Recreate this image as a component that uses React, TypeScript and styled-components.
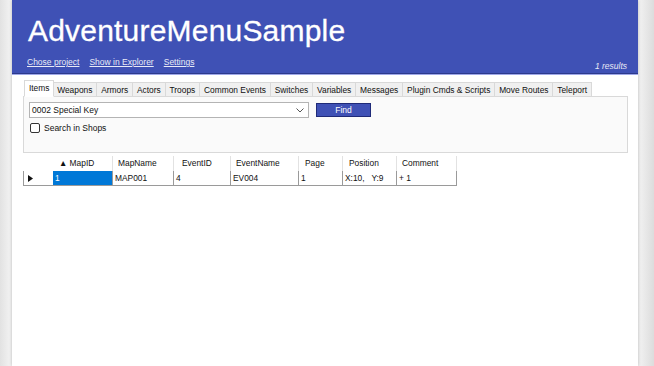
import * as React from 'react';
import styled, { createGlobalStyle } from 'styled-components';

const GlobalStyle = createGlobalStyle`
  html, body {
    margin: 0;
    padding: 0;
    height: 100%;
    overflow: hidden;
  }
  body {
    font-family: "Liberation Sans", Arial, sans-serif;
    background: linear-gradient(90deg, #e2e2e2 0px, #f3f3f3 11px, #f3f3f3 638px, #dcdcdc 654px);
  }
`;

const TABS = [
  'Items',
  'Weapons',
  'Armors',
  'Actors',
  'Troops',
  'Common Events',
  'Switches',
  'Variables',
  'Messages',
  'Plugin Cmds & Scripts',
  'Move Routes',
  'Teleport',
];

const COLUMNS = [
  { title: '▲ MapID', width: 60, pad: 6 },
  { title: 'MapName', width: 61, pad: 5 },
  { title: 'EventID', width: 57, pad: 8 },
  { title: 'EventName', width: 68, pad: 5 },
  { title: 'Page', width: 44, pad: 6 },
  { title: 'Position', width: 54, pad: 6 },
  { title: 'Comment', width: 60, pad: 5 },
];

const ROW = ['1', 'MAP001', '4', 'EV004', '1', 'X:10,   Y:9', '+ 1'];

export default function App() {
  const [tab, setTab] = React.useState(0);
  const [shops, setShops] = React.useState(false);

  return (
    <>
      <GlobalStyle />
      <Window>
        <Header>
          <Title>AdventureMenuSample</Title>
          <LinkBar>
            <Links>
              <HeaderLink>Chose project</HeaderLink>
              <HeaderLink>Show in Explorer</HeaderLink>
              <HeaderLink>Settings</HeaderLink>
            </Links>
            <Results>1 results</Results>
          </LinkBar>
        </Header>
        <Content>
          <TabStrip>
            {TABS.map((t, i) => (
              <Tab key={t} $active={i === tab} onClick={() => setTab(i)}>
                {t}
              </Tab>
            ))}
          </TabStrip>
          <TabPanel>
            <SearchRow>
              <Combo>
                <span>0002 Special Key</span>
                <svg width="8" height="5" viewBox="0 0 8 5">
                  <path d="M0.5 0.5 L4 4 L7.5 0.5" fill="none" stroke="#555" strokeWidth="1" />
                </svg>
              </Combo>
              <FindButton>Find</FindButton>
            </SearchRow>
            <CheckRow onClick={() => setShops(!shops)}>
              <CheckBox $checked={shops} />
              <span>Search in Shops</span>
            </CheckRow>
          </TabPanel>
          <Grid>
            <GridRow>
              <RowHeader $head />
              {COLUMNS.map((c) => (
                <HeadCell key={c.title} $w={c.width} $pad={c.pad}>
                  {c.title}
                </HeadCell>
              ))}
            </GridRow>
            <GridRow>
              <RowHeader>
                <svg width="5" height="7" viewBox="0 0 5 7">
                  <path d="M0 0 L5 3.5 L0 7 Z" fill="#111" />
                </svg>
              </RowHeader>
              {ROW.map((v, i) => (
                <DataCell key={i} $w={COLUMNS[i].width} $selected={i === 0}>
                  {v}
                </DataCell>
              ))}
            </GridRow>
          </Grid>
        </Content>
      </Window>
    </>
  );
}

const Window = styled.div`
  margin: 0 16px 0 12px;
  height: 366px;
  background: #ffffff;
  box-shadow: 0 0 3px rgba(0, 0, 0, 0.25);
  display: flex;
  flex-direction: column;
`;

const Header = styled.div`
  background: #3f51b5;
  border-bottom: 1px solid #2c3a8c;
  box-shadow: 0 1px 0 #9fa8e8;
  height: 73px;
  padding: 0 11px 0 16px;
  display: flex;
  flex-direction: column;
`;

const Title = styled.div`
  color: #ffffff;
  font-size: 30px;
  line-height: 30px;
  margin-top: 16px;
  letter-spacing: 0.2px;
  -webkit-text-stroke: 0.3px #ffffff;
`;

const LinkBar = styled.div`
  display: flex;
  align-items: flex-end;
  justify-content: space-between;
  margin-top: 11px;
`;

const Links = styled.div`
  display: flex;
  gap: 10px;
  margin-left: -1px;
`;

const HeaderLink = styled.a`
  color: #e8eaf6;
  font-size: 8.5px;
  text-decoration: underline;
  cursor: pointer;
`;

const Results = styled.div`
  color: #e8eaf6;
  font-size: 8.5px;
  font-style: italic;
  margin-bottom: -4px;
`;

const Content = styled.div`
  padding: 5px 10px 0 11px;
  display: flex;
  flex-direction: column;
`;

const TabStrip = styled.div`
  display: flex;
  align-items: flex-end;
  height: 17px;
  padding-left: 3px;
`;

const Tab = styled.div<{ $active: boolean }>`
  font-size: 8.4px;
  color: #111;
  padding: 0 3.9px;
  height: ${(p) => (p.$active ? 17 : 15)}px;
  line-height: 15px;
  background: ${(p) => (p.$active ? '#ffffff' : '#f0f0f0')};
  border: 1px solid #d9d9d9;
  border-bottom: ${(p) => (p.$active ? '1px solid #ffffff' : '1px solid #d9d9d9')};
  margin-left: ${(p) => (p.$active ? -2 : -1)}px;
  margin-right: ${(p) => (p.$active ? -1 : 0)}px;
  position: relative;
  z-index: ${(p) => (p.$active ? 1 : 0)};
  margin-bottom: -1px;
  box-sizing: border-box;
  white-space: nowrap;
  cursor: default;
`;

const TabPanel = styled.div`
  background: #fafafa;
  border: 1px solid #d9d9d9;
  height: 50px;
  padding: 5px 5px 0 5px;
  display: flex;
  flex-direction: column;
  gap: 5px;
`;

const SearchRow = styled.div`
  display: flex;
  align-items: center;
  gap: 7px;
`;

const Combo = styled.div`
  width: 280px;
  height: 16px;
  box-sizing: border-box;
  border: 1px solid #b4b4b4;
  background: #ffffff;
  display: flex;
  align-items: center;
  justify-content: space-between;
  padding: 0 4px 0 2px;
  font-size: 8.5px;
  color: #111;
`;

const FindButton = styled.button`
  width: 55px;
  height: 14px;
  padding: 0;
  background: #3f51b5;
  border: 1px solid #1f2a78;
  color: #ffffff;
  font-family: inherit;
  font-size: 8.5px;
  line-height: 12px;
`;

const CheckRow = styled.label`
  display: flex;
  align-items: center;
  gap: 4px;
  font-size: 8.5px;
  color: #111;
  padding-left: 1px;
`;

const CheckBox = styled.span<{ $checked: boolean }>`
  width: 10px;
  height: 10px;
  box-sizing: border-box;
  border: 1px solid #333;
  border-radius: 2px;
  background: ${(p) => (p.$checked ? '#3f51b5' : '#ffffff')};
`;

const Grid = styled.div`
  margin-top: 3px;
  display: flex;
  flex-direction: column;
`;

const GridRow = styled.div`
  display: flex;
`;

const RowHeader = styled.div<{ $head?: boolean }>`
  width: 30px;
  height: 15px;
  box-sizing: border-box;
  background: #ffffff;
  border-left: ${(p) => (p.$head ? '1px solid transparent' : '1px solid #9a9a9a')};
  border-bottom: ${(p) => (p.$head ? 'none' : '1px solid #9a9a9a')};
  display: flex;
  align-items: center;
  padding-left: 4px;
`;

const HeadCell = styled.div<{ $w: number; $pad: number }>`
  width: ${(p) => p.$w}px;
  height: 15px;
  box-sizing: border-box;
  border-right: 1px solid #e2e2e2;
  padding-left: ${(p) => p.$pad}px;
  font-size: 8.4px;
  line-height: 15px;
  color: #111;
  white-space: nowrap;
`;

const DataCell = styled.div<{ $w: number; $selected: boolean }>`
  width: ${(p) => p.$w}px;
  height: 15px;
  box-sizing: border-box;
  border-right: 1px solid #9a9a9a;
  border-bottom: 1px solid #9a9a9a;
  background: ${(p) => (p.$selected ? '#0078d7' : '#ffffff')};
  color: ${(p) => (p.$selected ? '#ffffff' : '#111')};
  padding-left: 2px;
  font-size: 8.4px;
  line-height: 14px;
  white-space: pre;
`;
